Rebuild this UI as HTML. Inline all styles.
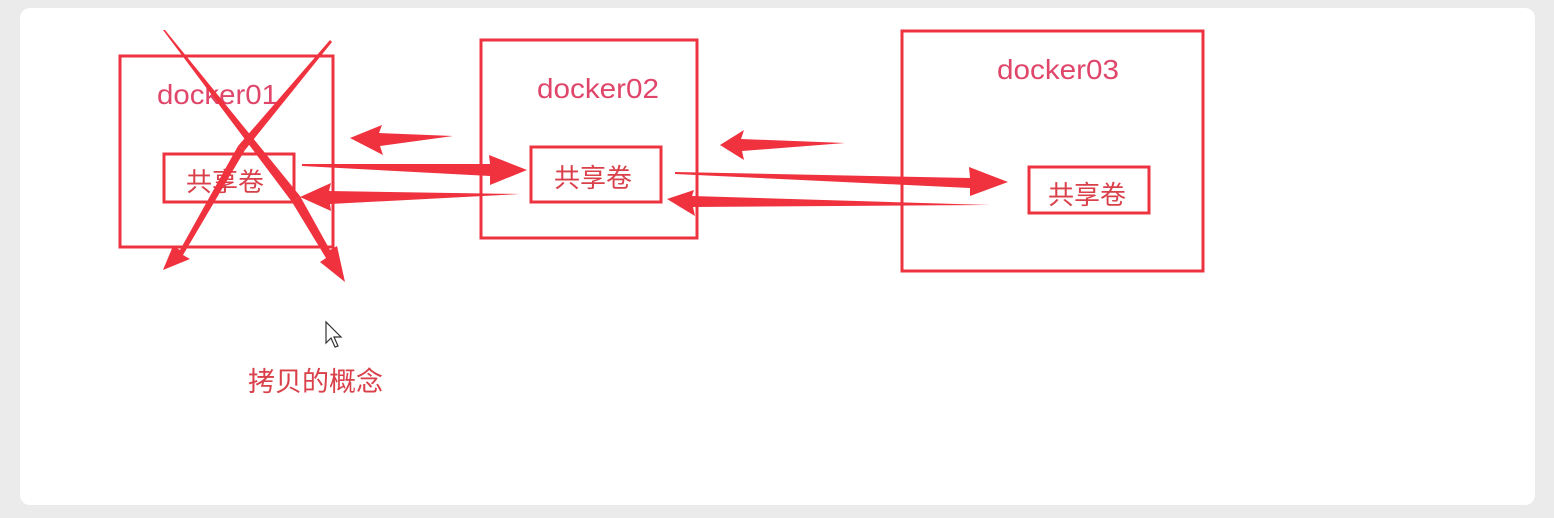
<!DOCTYPE html>
<html><head><meta charset="utf-8"><style>
body{margin:0;width:1554px;height:518px;background:#ebebeb;overflow:hidden;font-family:"Liberation Sans","Noto Sans CJK SC",sans-serif}
.card{position:absolute;left:20px;top:8px;width:1515px;height:497px;background:#fff;border-radius:10px}
svg{position:absolute;left:0;top:0}
</style></head><body>
<div class="card"></div>
<svg width="1554" height="518" viewBox="0 0 1554 518">
<g fill="none" stroke="#ee3340" stroke-width="3">
<rect x="120" y="56" width="213" height="191"/>
<rect x="481" y="40" width="216" height="198"/>
<rect x="902" y="31" width="301" height="240"/>
<rect x="164" y="154" width="130" height="48"/>
<rect x="531" y="147" width="130" height="55"/>
<rect x="1029" y="167" width="120" height="46"/>
</g>
<g font-size="28" fill="#e0456a" font-family="Liberation Sans, sans-serif">
<text x="157" y="104" textLength="121" lengthAdjust="spacingAndGlyphs">docker01</text>
<text x="537" y="98" textLength="122" lengthAdjust="spacingAndGlyphs">docker02</text>
<text x="997" y="79" textLength="122" lengthAdjust="spacingAndGlyphs">docker03</text>
</g>
<g font-size="26" fill="#d9404a" font-family="Liberation Sans, Noto Sans CJK SC, sans-serif">
<text x="186" y="191">共享卷</text>
<text x="554" y="187">共享卷</text>
<text x="1048" y="204">共享卷</text>
<text x="248" y="391" font-size="27">拷贝的概念</text>
</g>
<g fill="#f0323f">
<polygon points="350,138 382,125 379,133 453,136 380,146 383,155"/>
<polygon points="302,164 490,164 489,155 527,170 490,185 490,176 302,166"/>
<polygon points="300,197 331,183 329,191 520,194 330,204 331,211"/>
<polygon points="720,145 744,130 741,139 845,143 742,151 744,160"/>
<polygon points="675,172 970,178 969,167 1008,182 970,196 970,188 675,174"/>
<polygon points="667,199 694,190 692,196 990,205 693,207 695,216"/>
<polygon points="163,30 165,30 300,196 292,202"/>
<polygon points="292,202 300,196 330,250 337,246 345,282 320,262 326,258"/>
<polygon points="330,40 332,42 245,150 238,146"/>
<polygon points="245,150 238,146 180,250 173,246 163,270 190,259 183,255"/>
</g>
<path d="M326 322 L326 343 L331 338 L335 347 L338 346 L334 337 L341 337 Z" fill="#fff" stroke="#333" stroke-width="1.2"/>
</svg>
</body></html>
